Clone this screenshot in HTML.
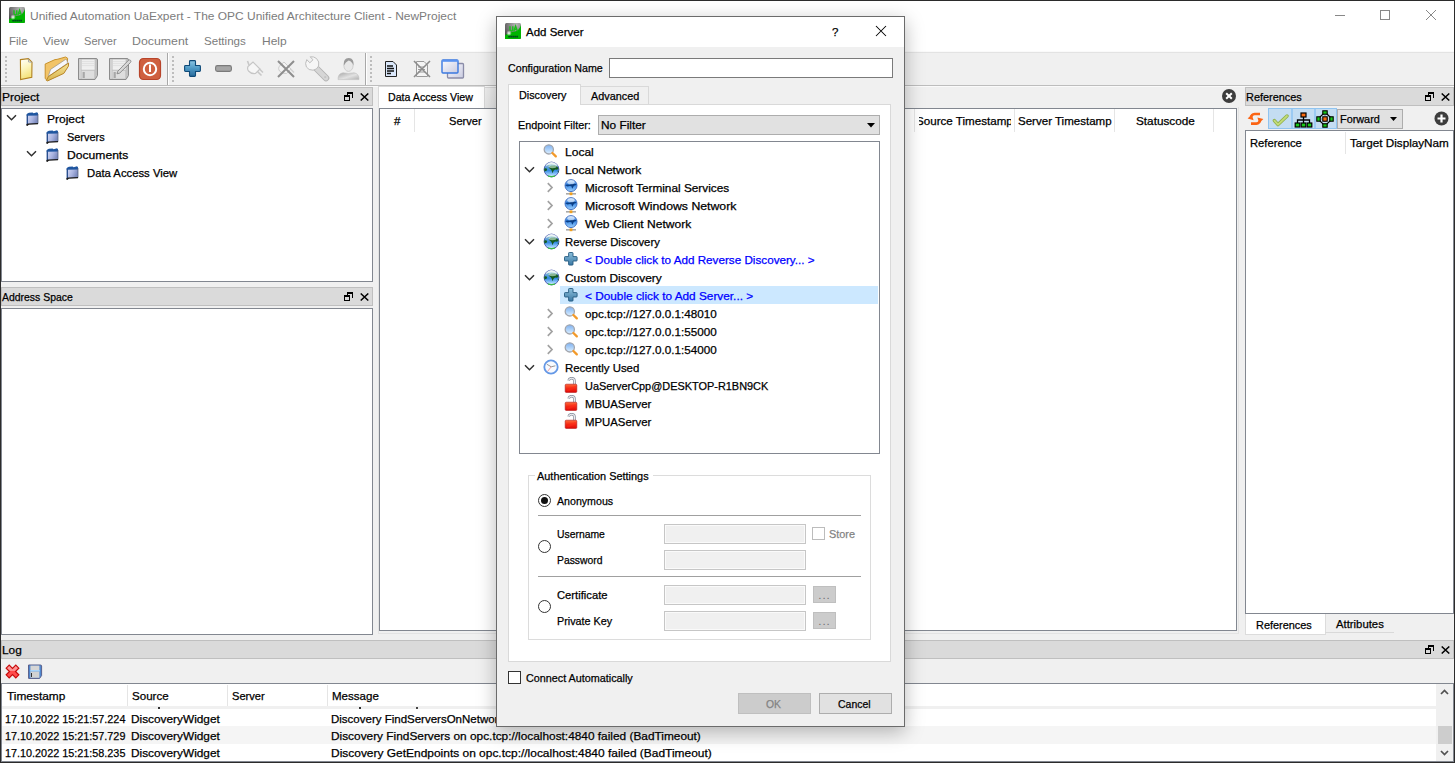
<!DOCTYPE html>
<html><head><meta charset="utf-8">
<style>
*{box-sizing:border-box;margin:0;padding:0}
html,body{width:1455px;height:763px;overflow:hidden}
body{position:relative;background:#f0f0f0;font-family:"Liberation Sans",sans-serif;font-size:11.5px;color:#000}
.a{position:absolute}
.t{position:absolute;white-space:nowrap;line-height:14px;-webkit-text-stroke:0.25px currentColor}
.frame{position:absolute;background:#fff;border:1px solid #828790}
.dtitle{position:absolute;background:#dadada;border:1px solid #bfbfbf}
.hdiv{position:absolute;width:1px;background:#e5e5e5}
.grip{width:2px;height:26px;background:repeating-linear-gradient(#bdbdbd 0 2px,transparent 2px 4px)}
.float{position:absolute;width:9px;height:9px}
.dclose{position:absolute;width:9px;height:8px}
.dclose svg{display:block}
.book{position:absolute;width:14px;height:15px}
.dig{letter-spacing:-0.55px}
.blue{color:#0000ff}
.radio{position:absolute;width:13px;height:13px;border:1px solid #333;border-radius:50%;background:#fff}
.radio.on:after{content:"";position:absolute;left:2px;top:2px;width:7px;height:7px;border-radius:50%;background:#111}
.dis{position:absolute;width:142px;height:20px;background:#f0f0f0;border:1px solid #c6c6c6;box-shadow:inset 0 0 0 1px #fafafa}
.dots{position:absolute;width:23px;height:17px;background:#cccccc;border:1px solid #bfbfbf;color:#6f6f6f;font-size:11.5px;line-height:16px;text-align:center;letter-spacing:1px}
.dig2{letter-spacing:-0.2px}
.caps{letter-spacing:0}
</style></head><body>
<svg width="0" height="0" style="position:absolute">
 <defs>
  <linearGradient id="uag" x1="0" y1="0" x2="1" y2="1"><stop offset="0" stop-color="#555"/><stop offset=".45" stop-color="#9a9a9a"/><stop offset=".5" stop-color="#00b000"/><stop offset="1" stop-color="#00a800"/></linearGradient>
  <linearGradient id="lens" x1="0" y1="0" x2="0" y2="1"><stop offset="0" stop-color="#7fb0f0"/><stop offset=".45" stop-color="#a6cdf8"/><stop offset="1" stop-color="#e0f0ff"/></linearGradient>
  <linearGradient id="glb" x1="0" y1="0" x2="0" y2="1"><stop offset="0" stop-color="#c8e8d0"/><stop offset=".3" stop-color="#6aa8d8"/><stop offset=".55" stop-color="#2f86e0"/><stop offset=".85" stop-color="#9ed0ff"/><stop offset="1" stop-color="#eef8ff"/></linearGradient>
  <linearGradient id="sglb" x1="0" y1="0" x2="0" y2="1"><stop offset="0" stop-color="#cfe6ff"/><stop offset=".4" stop-color="#2e7fe0"/><stop offset="1" stop-color="#9fd2ff"/></linearGradient>
  <linearGradient id="plg" x1="0" y1="0" x2="0" y2="1"><stop offset="0" stop-color="#8cc0dc"/><stop offset="1" stop-color="#3a78a4"/></linearGradient>
  <linearGradient id="lkg" x1="0" y1="0" x2="0" y2="1"><stop offset="0" stop-color="#ff6a3a"/><stop offset=".5" stop-color="#f42a14"/><stop offset="1" stop-color="#e00808"/></linearGradient>
  <radialGradient id="uagr" cx=".7" cy=".1" r=".9"><stop offset="0" stop-color="#b8b8b8"/><stop offset=".6" stop-color="#7a7a7a"/><stop offset="1" stop-color="#4a4a4a"/></radialGradient>
  <radialGradient id="glr" cx=".5" cy=".5" r=".5"><stop offset="0" stop-color="#fff"/><stop offset="1" stop-color="#fff" stop-opacity="0"/></radialGradient>
  <symbol id="uaicon" viewBox="0 0 16 16">
   <rect x="0" y="0" width="16" height="16" rx="1.5" fill="url(#uagr)"/>
   <path d="M0 16 V12.5 Q3 9.6 7 9 Q11.5 8.6 13.6 6.4 Q15.2 4.5 16 2 V14.5 Q16 16 14.5 16Z" fill="#00b400"/>
   <path d="M5 3.2 V6.6 Q5 8 6.4 8 Q7.8 8 7.8 6.6 V3.2" fill="none" stroke="#18c018" stroke-width="1.4"/>
   <path d="M8.8 8.2 L10.6 3 L12.4 8.2 M9.5 6.4 H11.7" fill="none" stroke="#18c018" stroke-width="1.3"/>
   <circle cx="4" cy="10.2" r="2.8" fill="url(#glr)"/>
   <path d="M3.4 13.6 H13.2" stroke="#032" stroke-width="1.8" stroke-dasharray="1.4 .6"/>
  </symbol>
  <symbol id="chev" viewBox="0 0 11 7"><path d="M1 1.2 L5.5 5.7 L10 1.2" fill="none" stroke="#303030" stroke-width="1.5"/></symbol>
  <symbol id="chevr" viewBox="0 0 8 11"><path d="M1.8 1.2 L6 5.5 L1.8 9.8" fill="none" stroke="#a2a2a2" stroke-width="1.7"/></symbol>
  <symbol id="mag" viewBox="0 0 16 15"><circle cx="5.8" cy="5.4" r="4.6" fill="url(#lens)" stroke="#a2a6ae" stroke-width="1.3"/><path d="M9.4 9 L12.8 12.4" stroke="#f39a2a" stroke-width="2.3" stroke-linecap="round"/></symbol>
  <symbol id="globe" viewBox="0 0 17 17">
   <circle cx="8.5" cy="8.5" r="7.4" fill="url(#glb)" stroke="#5262b4" stroke-width="1"/>
   <path d="M1.2 7.6 Q2.6 7 3.6 7.6 Q4.6 8.6 3.8 9.6 Q2.8 10.2 1.6 10.6 Q1 9 1.2 7.6Z" fill="#155e22"/>
   <path d="M5.6 6.8 Q6.5 4.6 9 4.4 Q12 4.2 14.4 5.8 Q15.6 7.2 15.5 8.4 Q14.6 8 13.8 8.8 Q12.4 8.2 11.2 9 Q10.2 10 9.6 12.2 Q9 10.6 8.6 9.4 Q7.8 7.8 5.6 6.8Z" fill="#145a20"/>
   <path d="M15.2 9.4 Q15.9 10 15.6 11.8 Q14.8 11 14.6 10Z" fill="#155e22"/>
   <path d="M2.2 5.2 Q5 1.2 8.5 1.1 Q12.5 1.2 15 5.2 Q12 3.6 8.5 3.6 Q5 3.6 2.2 5.2Z" fill="#fff" opacity=".75"/>
   <ellipse cx="9.5" cy="5.6" rx="4" ry="1.6" fill="#e8fff0" opacity=".55"/>
   <path d="M5 14.9 Q8.5 16.2 12 14.9" stroke="#3cba44" stroke-width="1.3" fill="none"/>
  </symbol>
  <symbol id="sglobe" viewBox="0 0 14 17">
   <circle cx="7" cy="6.6" r="6" fill="url(#sglb)" stroke="#3d6cc0" stroke-width=".9"/>
   <path d="M1.2 6.2 Q3 5.2 5 5.8 Q8 4.2 12.6 5 Q11.8 6.6 10 6.8 L8.2 9.8 L7.4 7.2 Q5 6.6 3.5 7.6Z" fill="#0b3f86"/>
   <ellipse cx="7" cy="3.2" rx="3.6" ry="2" fill="#fff" opacity=".55"/>
   <path d="M2 14.8H12" stroke="#a9a9a9" stroke-width="1.6"/>
   <rect x="5.6" y="13.4" width="2.8" height="2.8" fill="#f0a020"/>
  </symbol>
  <symbol id="splus" viewBox="0 0 14 14"><path d="M4.6 1.2 Q4.6 0.5 5.3 0.5 L8.3 0.5 Q9 0.5 9 1.2 L9 4.6 L12.4 4.6 Q13.1 4.6 13.1 5.3 L13.1 8.3 Q13.1 9 12.4 9 L9 9 L9 12.4 Q9 13.1 8.3 13.1 L5.3 13.1 Q4.6 13.1 4.6 12.4 L4.6 9 L1.2 9 Q0.5 9 0.5 8.3 L0.5 5.3 Q0.5 4.6 1.2 4.6 L4.6 4.6Z" fill="url(#plg)" stroke="#245a80" stroke-width=".9"/></symbol>
  <symbol id="clock" viewBox="0 0 16 16"><circle cx="8" cy="8" r="6.7" fill="#f8fafe" stroke="#6498e6" stroke-width="1.8"/><path d="M8.2 7.8 L3.8 5.2 M8.2 7.8 L12.4 6.8" stroke="#8a8a8a" stroke-width=".9"/><path d="M8.2 7.8 L4.6 12.4" stroke="#f28a8a" stroke-width=".8"/></symbol>
  <symbol id="lock" viewBox="0 0 14 16">
   <path d="M10.5 7.5 V4.2 Q10.5 1.2 7.6 1.2 Q5.2 1.2 4.6 3.6" fill="none" stroke="#8c919e" stroke-width="2.6"/>
   <path d="M10.5 7.5 V4.2 Q10.5 1.2 7.6 1.2 Q5.2 1.2 4.6 3.6" fill="none" stroke="#eceef2" stroke-width="1.1"/>
   <rect x="1.2" y="7.2" width="11.6" height="8.2" rx="1" fill="url(#lkg)" stroke="#b01818" stroke-width=".6"/>
   <path d="M2 13 L11 9 L12.4 9 L12.4 11 L4 14.6Z" fill="#ff2a1a" opacity=".5"/>
  </symbol>
  <linearGradient id="bkg" x1="0" y1="0" x2="1" y2="0.4"><stop offset="0" stop-color="#d6dcf8"/><stop offset=".6" stop-color="#aab4e0"/><stop offset="1" stop-color="#7e8cc0"/></linearGradient>
  <symbol id="book" viewBox="0 0 14 15">
   <rect x="2.2" y="3" width="10.6" height="10" fill="url(#bkg)"/>
   <rect x="1.6" y="3" width="1.4" height="10.5" fill="#2a4f8f"/>
   <path d="M1.6 4.6 Q1.8 1.8 4 1.7 L7.6 1.4 L8.6 2.2 L12 1.2 L13 2.2 L13 4.4 L1.6 4.8Z" fill="#1f56a0"/>
   <path d="M12.9 3 V12.6" stroke="#4a5a80" stroke-width=".9"/>
   <path d="M1 14.3 Q1.2 12.6 3 12.6 L13 12.1 L13 13.2 L4 13.8 Q3 14.2 2.6 15Z" fill="#1a1a1a"/>
  </symbol>
  <symbol id="flt" viewBox="0 0 9 9" shape-rendering="crispEdges"><path d="M3 0H9V6H8V2H4V3H3Z" fill="#000"/><path d="M0 3H6V9H0Z M1 5V8H5V5Z" fill="#000" fill-rule="evenodd"/></symbol>
  <symbol id="xcl" viewBox="0 0 9 8"><path d="M0.7 0.5L8.3 7.5M8.3 0.5L0.7 7.5" stroke="#000" stroke-width="1.5"/></symbol>
 </defs>
</svg>
<!-- window border -->
<div class="a" style="left:0;top:0;width:1455px;height:763px;border:1px solid #2b2b2b;z-index:50;pointer-events:none"></div>
<!-- title bar -->
<div class="a" style="left:1px;top:1px;width:1453px;height:29px;background:#fff"></div>
<svg class="a" style="left:9px;top:7px" width="16" height="16"><use href="#uaicon"/></svg>
<div class="t" style="left:30px;top:9px;color:#7c7c7c;-webkit-text-stroke:0;transform:scaleX(1.0393);transform-origin:0 0">Unified Automation UaExpert - The OPC Unified Architecture Client - NewProject</div>
<!-- caption buttons -->
<div class="a" style="left:1335px;top:15px;width:10px;height:1px;background:#888"></div>
<div class="a" style="left:1380px;top:10px;width:10px;height:10px;border:1px solid #888"></div>
<svg class="a" style="left:1425px;top:9px" width="12" height="12" viewBox="0 0 12 12"><path d="M1 1L11 11M11 1L1 11" stroke="#888" stroke-width="1"/></svg>
<!-- menu bar -->
<div class="a" style="left:1px;top:30px;width:1453px;height:21px;background:#fff"></div>
<div class="t" style="left:9px;top:34px;color:#7c7c7c;-webkit-text-stroke:0;transform:scaleX(1.0038);transform-origin:0 0">File</div>
<div class="t" style="left:43px;top:34px;color:#7c7c7c;-webkit-text-stroke:0;transform:scaleX(1.0438);transform-origin:0 0">View</div>
<div class="t" style="left:84px;top:34px;color:#7c7c7c;-webkit-text-stroke:0;transform:scaleX(0.9625);transform-origin:0 0">Server</div>
<div class="t" style="left:132px;top:34px;color:#7c7c7c;-webkit-text-stroke:0;transform:scaleX(1.0723);transform-origin:0 0">Document</div>
<div class="t" style="left:204px;top:34px;color:#7c7c7c;-webkit-text-stroke:0;transform:scaleX(1.0060);transform-origin:0 0">Settings</div>
<div class="t" style="left:262px;top:34px;color:#7c7c7c;-webkit-text-stroke:0;transform:scaleX(1.0443);transform-origin:0 0">Help</div>
<!-- toolbar -->
<div class="a" style="left:1px;top:51px;width:1453px;height:1px;background:#fafafa"></div>
<div class="a" style="left:1px;top:52px;width:1453px;height:1px;background:#e3e3e3"></div>
<div class="a" style="left:1px;top:85px;width:1453px;height:1px;background:#bdbdbd"></div>
<div class="a" style="left:1px;top:86px;width:1453px;height:1px;background:#fafafa"></div>
<!-- grips -->
<div class="a grip" style="left:5px;top:56px"></div>
<div class="a" style="left:167px;top:53px;width:1px;height:32px;background:#a8a8a8"></div><div class="a" style="left:168px;top:53px;width:1px;height:32px;background:#fff"></div>
<div class="a grip" style="left:172px;top:56px"></div>
<div class="a" style="left:365px;top:53px;width:1px;height:32px;background:#a8a8a8"></div><div class="a" style="left:366px;top:53px;width:1px;height:32px;background:#fff"></div>
<div class="a grip" style="left:370px;top:56px"></div>
<!-- tb icons -->
<svg class="a" style="left:18px;top:57px" width="16" height="24" viewBox="0 0 16 24">
 <defs><linearGradient id="ng" x1="0" y1="0" x2="0.3" y2="1"><stop offset="0" stop-color="#ffffff"/><stop offset=".5" stop-color="#fdf6c0"/><stop offset="1" stop-color="#f4e27a"/></linearGradient></defs>
 <path d="M2.4 2.6 L10.4 1.6 L14 5.2 L13.8 20.4 L2.6 22.6Z" fill="url(#ng)" stroke="#b08020" stroke-width="1.1"/>
 <path d="M10.4 1.6 L10.6 5 L14 5.2" fill="none" stroke="#9a9aa0" stroke-width=".8"/>
</svg>
<svg class="a" style="left:44px;top:56px" width="26" height="26" viewBox="0 0 26 26">
 <defs><linearGradient id="fg" x1="0" y1="0" x2="0" y2="1"><stop offset="0" stop-color="#f6e498"/><stop offset="1" stop-color="#d8b44e"/></linearGradient></defs>
 <path d="M1.2 8 L11 3.6 L13 3.4 L21.5 1 L23.6 2.2 L23.4 6 L2.6 23.8 L1.2 22.6Z" fill="#f2c468" stroke="#c8922c" stroke-width="1"/>
 <path d="M4.2 20.6 L6.6 13.4 L21.6 3.4 L23.2 4.4 L23.4 7.4Z" fill="#f7f7fb" stroke="#8c8c8c" stroke-width=".6"/>
 <path d="M2.4 24.4 L4.4 20.6 L24.6 7 L24.4 10.2 L19.8 17.4 L3.6 24.9Z" fill="url(#fg)" stroke="#b8862a" stroke-width="1"/>
</svg>
<svg class="a" style="left:77px;top:57px" width="22" height="24" viewBox="0 0 22 24">
 <path d="M1.5 1.5 H19 Q20.5 1.5 20.5 3 V18.5 L18 22.5 H1.5Z" fill="#c2c2c2" stroke="#8c8c8c" stroke-width="1"/>
 <rect x="2.2" y="2.4" width="1.6" height="19.4" fill="#d6d6d6"/>
 <rect x="4.6" y="2.6" width="13" height="8.6" fill="#efefef"/>
 <path d="M5 4.6H17M5 6.6H17M5 8.6H17" stroke="#dcdcdc" stroke-width=".8"/>
 <rect x="4.6" y="11.2" width="13" height="1.4" fill="#fafafa"/>
 <rect x="4.6" y="13.8" width="12.6" height="7.8" fill="#dedede"/>
 <rect x="5.6" y="15" width="2.2" height="6" fill="#a8a8a8"/>
</svg>
<svg class="a" style="left:108px;top:57px" width="24" height="24" viewBox="0 0 24 24">
 <path d="M1.5 1.5 H19 Q20.5 1.5 20.5 3 V18.5 L18 22.5 H1.5Z" fill="#c2c2c2" stroke="#8c8c8c" stroke-width="1"/>
 <rect x="2.2" y="2.4" width="1.6" height="19.4" fill="#d6d6d6"/>
 <rect x="4.6" y="2.6" width="13" height="8.6" fill="#efefef"/>
 <path d="M5 4.6H17M5 6.6H17M5 8.6H17" stroke="#dcdcdc" stroke-width=".8"/>
 <rect x="4.6" y="11.2" width="13" height="1.4" fill="#fafafa"/>
 <rect x="4.6" y="13.8" width="12.6" height="7.8" fill="#dedede"/>
 <rect x="5.6" y="15" width="2.2" height="6" fill="#a8a8a8"/>
 <path d="M9.8 14.2 L20.4 3.4 Q21.6 2.4 22.6 3.4 Q23.4 4.4 22.4 5.6 L11.8 16 L9 16.8Z" fill="#d8d8d8" stroke="#8e8e8e" stroke-width="1"/>
</svg>
<svg class="a" style="left:138px;top:57px" width="24" height="24" viewBox="0 0 24 24">
 <rect x="1.5" y="1.5" width="21" height="21" rx="4" fill="#cf6040" stroke="#b8442a" stroke-width="1.2"/>
 <circle cx="12" cy="12" r="6.2" fill="none" stroke="#fff" stroke-width="2"/>
 <rect x="11" y="7.5" width="2" height="7.5" fill="#fff"/>
</svg>
<svg class="a" style="left:184px;top:60px" width="17" height="17" viewBox="0 0 17 17">
 <defs><linearGradient id="pg" x1="0" y1="0" x2="0" y2="1"><stop offset="0" stop-color="#8cc6e4"/><stop offset=".5" stop-color="#4d98c4"/><stop offset="1" stop-color="#2a6c9c"/></linearGradient></defs>
 <path d="M5.5 1.5 Q5.5 0.6 6.4 0.6 L10.6 0.6 Q11.5 0.6 11.5 1.5 L11.5 5.5 L15.5 5.5 Q16.4 5.5 16.4 6.4 L16.4 10.6 Q16.4 11.5 15.5 11.5 L11.5 11.5 L11.5 15.5 Q11.5 16.4 10.6 16.4 L6.4 16.4 Q5.5 16.4 5.5 15.5 L5.5 11.5 L1.5 11.5 Q0.6 11.5 0.6 10.6 L0.6 6.4 Q0.6 5.5 1.5 5.5 L5.5 5.5Z" fill="url(#pg)" stroke="#0f4a78" stroke-width="1.1"/>
</svg>
<svg class="a" style="left:215px;top:65px" width="17" height="7" viewBox="0 0 17 7"><rect x="0.6" y="0.6" width="15.8" height="5.8" rx="1.8" fill="#a6a6a6" stroke="#7a7a7a" stroke-width="1.1"/></svg>
<svg class="a" style="left:246px;top:60px" width="18" height="18" viewBox="0 0 18 18">
 <path d="M2 6.5 L7 2 L14 9 L9.5 13.5 Q5 14 2.5 11 Q1 9 2 6.5Z" fill="#f7f7f7" stroke="#c6c6c6" stroke-width="1.2"/>
 <path d="M11.5 11.5 L15.5 15.5 M13.5 9 L17 12.5 M3 5 L1.5 1" stroke="#c8c8c8" stroke-width="1.6"/>
</svg>
<svg class="a" style="left:277px;top:60px" width="18" height="18" viewBox="0 0 18 18">
 <path d="M2 6.5 L7 2 L14 9 L9.5 13.5 Q5 14 2.5 11 Q1 9 2 6.5Z" fill="#f4f4f4" stroke="#cdcdcd" stroke-width="1"/>
 <path d="M11.5 11.5 L15.5 15.5 M13.5 9 L17 12.5" stroke="#d0d0d0" stroke-width="1.4"/>
 <path d="M1 1 L17 17 M17 1 L1 17" stroke="#8e8e8e" stroke-width="2"/>
</svg>
<svg class="a" style="left:304px;top:56px" width="26" height="26" viewBox="0 0 26 26">
 <path d="M11 11 L22 22" stroke="#b4b4b4" stroke-width="6.6" stroke-linecap="round"/>
 <path d="M11 11 L22 22" stroke="#d6d6d6" stroke-width="4.6" stroke-linecap="round"/>
 <path d="M2.8 3.6 L5.8 6.8 L9 3.8 L6.2 0.8 Q9.8 0.2 12.6 2.6 Q15.8 5.6 14.6 10 Q13 13.8 9 14.2 Q4.6 14.4 2.4 11 Q0.6 7.4 2.8 3.6Z" fill="#f6f6f6" stroke="#bdbdbd" stroke-width="1"/>
 <circle cx="21.2" cy="21.2" r="1.1" fill="#c4c4c4"/>
</svg>
<svg class="a" style="left:337px;top:56px" width="23" height="25" viewBox="0 0 23 25">
 <defs><linearGradient id="psg" x1="0" y1="0" x2="1" y2="1"><stop offset="0" stop-color="#a8a8a8"/><stop offset=".55" stop-color="#e2e2e2"/><stop offset="1" stop-color="#b0b0b0"/></linearGradient></defs>
 <path d="M1 23.6 Q0.8 17.6 6 16.8 L11.5 17.4 L17 16.8 Q22.2 17.6 22 23.6Z" fill="url(#psg)" stroke="#c0c0c0" stroke-width=".6"/>
 <ellipse cx="11.5" cy="9.4" rx="4.6" ry="6" fill="#e8e8e8" stroke="#c6c6c6" stroke-width=".8"/>
 <path d="M6.8 9.6 Q6 2.2 11.8 2 Q17.2 2.2 16.6 9.6 Q14.8 5.4 11.6 4.6 Q8.6 6 6.8 9.6Z" fill="#9a9a9a"/>
</svg>
<svg class="a" style="left:384px;top:60px" width="14" height="18" viewBox="0 0 14 18">
 <path d="M1.5 1.5 L9 1.5 L12.5 5 L12.5 16.5 L1.5 16.5Z" fill="#dbe8fb" stroke="#222" stroke-width="1"/>
 <path d="M3 6h6M3 8.5h7M3 11h7M3 13.5h4" stroke="#111" stroke-width="1.3"/>
</svg>
<svg class="a" style="left:413px;top:60px" width="18" height="18" viewBox="0 0 18 18">
 <path d="M3.5 1.5 L11 1.5 L14.5 5 L14.5 16.5 L3.5 16.5Z" fill="#f4f4f4" stroke="#9a9a9a" stroke-width="1"/>
 <path d="M5 7h6M5 9.5h7M5 12h7" stroke="#9a9a9a" stroke-width="1.1"/>
 <path d="M1 1 L17 17 M17 1 L1 17" stroke="#8c8c8c" stroke-width="1.6"/>
</svg>
<svg class="a" style="left:441px;top:59px" width="24" height="20" viewBox="0 0 24 20">
 <defs><linearGradient id="wg" x1="0" y1="0" x2="1" y2="1"><stop offset="0" stop-color="#fbfbff"/><stop offset="1" stop-color="#c9cbe0"/></linearGradient></defs>
 <rect x="6.5" y="4.5" width="16" height="14.5" rx="1" fill="url(#wg)" stroke="#8a8ca8" stroke-width="1.3"/>
 <rect x="1" y="1" width="16" height="13" rx="1" fill="url(#wg)" stroke="#3a78e0" stroke-width="1.4"/>
 <rect x="1" y="1" width="16" height="1.8" fill="#5a92f0"/>
</svg>
<!-- Project dock -->
<div class="dtitle" style="left:1px;top:87px;width:372px;height:19px"></div>
<div class="t" style="left:2px;top:90px;transform:scaleX(1.0449);transform-origin:0 0">Project</div>
<svg class="float" style="left:344px;top:92px" width="9" height="9"><use href="#flt"/></svg>
<svg class="dclose" style="left:360px;top:93px" width="9" height="8"><use href="#xcl"/></svg>
<div class="frame" style="left:1px;top:108px;width:372px;height:174px"></div>
<svg class="a" style="left:6px;top:114px" width="11" height="7" viewBox="0 0 11 7"><path d="M1 1.2 L5.5 5.7 L10 1.2" fill="none" stroke="#303030" stroke-width="1.5"/></svg>
<svg class="book" style="left:25px;top:111px" width="14" height="15"><use href="#book"/></svg>
<div class="t" style="left:47px;top:112px;transform:scaleX(1.0449);transform-origin:0 0">Project</div>
<svg class="book" style="left:45px;top:129px" width="14" height="15"><use href="#book"/></svg>
<div class="t" style="left:67px;top:130px;transform:scaleX(0.9490);transform-origin:0 0">Servers</div>
<svg class="a" style="left:26px;top:150px" width="11" height="7" viewBox="0 0 11 7"><path d="M1 1.2 L5.5 5.7 L10 1.2" fill="none" stroke="#303030" stroke-width="1.5"/></svg>
<svg class="book" style="left:45px;top:147px" width="14" height="15"><use href="#book"/></svg>
<div class="t" style="left:67px;top:148px;transform:scaleX(1.0539);transform-origin:0 0">Documents</div>
<svg class="book" style="left:65px;top:165px" width="14" height="15"><use href="#book"/></svg>
<div class="t" style="left:87px;top:166px;transform:scaleX(0.9820);transform-origin:0 0">Data Access View</div>

<!-- Address Space dock -->
<div class="dtitle" style="left:1px;top:287px;width:372px;height:19px"></div>
<div class="t" style="left:2px;top:290px;transform:scaleX(0.9078);transform-origin:0 0">Address Space</div>
<svg class="float" style="left:344px;top:292px" width="9" height="9"><use href="#flt"/></svg>
<svg class="dclose" style="left:360px;top:293px" width="9" height="8"><use href="#xcl"/></svg>
<div class="frame" style="left:1px;top:308px;width:372px;height:327px"></div>

<!-- central -->
<div class="a" style="left:378px;top:86px;width:107px;height:23px;background:#fff;border:1px solid #d9d9d9;border-bottom:none"></div>
<div class="t" style="left:388px;top:90px;transform:scaleX(0.925);transform-origin:0 0">Data Access View</div>
<div class="a" style="left:484px;top:87px;width:20px;height:21px;background:linear-gradient(#f0f0f0,#e8e8e8);border:1px solid #d9d9d9;border-bottom:none"></div>
<svg class="a" style="left:1221px;top:88px" width="16" height="16" viewBox="0 0 16 16"><circle cx="8" cy="8" r="7" fill="#3d3d3d"/><path d="M5.2 5.2L10.8 10.8M10.8 5.2L5.2 10.8" stroke="#fff" stroke-width="2"/></svg>
<div class="a" style="left:378px;top:107px;width:861px;height:527px;border:1px solid #e3e3e3;border-top:none"></div>
<div class="frame" style="left:379px;top:108px;width:858px;height:523px"></div>
<div class="hdiv" style="left:414px;top:109px;height:23px"></div>
<div class="t" style="left:394px;top:114px">#</div>
<div class="t" style="left:449px;top:114px;transform:scaleX(0.9625);transform-origin:0 0">Server</div>
<div class="hdiv" style="left:914px;top:109px;height:23px"></div>
<div class="a" style="left:919px;top:110px;width:92px;height:20px;overflow:hidden"><div class="t" style="left:-3px;top:4px;transform:scaleX(1.01);transform-origin:0 0">Source Timestamp</div></div>
<div class="hdiv" style="left:1014px;top:109px;height:23px"></div>
<div class="t" style="left:1018px;top:114px;transform:scaleX(1.0031);transform-origin:0 0">Server Timestamp</div>
<div class="hdiv" style="left:1114px;top:109px;height:23px"></div>
<div class="t" style="left:1136px;top:114px;transform:scaleX(1.0219);transform-origin:0 0">Statuscode</div>
<div class="hdiv" style="left:1213px;top:109px;height:23px"></div>

<!-- References dock -->
<div class="dtitle" style="left:1245px;top:87px;width:209px;height:19px"></div>
<div class="t" style="left:1246px;top:90px;transform:scaleX(0.9488);transform-origin:0 0">References</div>
<svg class="float" style="left:1425px;top:92px" width="9" height="9"><use href="#flt"/></svg>
<svg class="dclose" style="left:1441px;top:93px" width="9" height="8"><use href="#xcl"/></svg>
<svg class="a" style="left:1246px;top:110px" width="19" height="17" viewBox="0 0 19 17">
 <path d="M14 4 H8.5 Q7 4 6 5.2 L4.8 6.8" fill="none" stroke="#fb6414" stroke-width="2.6"/>
 <path d="M1.6 8.6 L5.8 4.6 L7.6 10.2Z" fill="#fb6414"/>
 <path d="M5 13.6 H10.5 Q12 13.6 13 12.4 L14.2 10.8" fill="none" stroke="#fb6414" stroke-width="2.6"/>
 <path d="M17.4 9 L13.2 13 L11.4 7.4Z" fill="#fb6414"/>
</svg>
<div class="a" style="left:1268px;top:108px;width:69px;height:21px;background:#c4ddf2;border:1px solid #90c4f0"></div>
<div class="a" style="left:1291px;top:109px;width:2px;height:19px;background:#9ccaf2"></div>
<div class="a" style="left:1314px;top:109px;width:2px;height:19px;background:#9ccaf2"></div>
<svg class="a" style="left:1271px;top:110px" width="18" height="17" viewBox="0 0 18 17"><path d="M3.4 10.6 L7 14.6 L16 6" fill="none" stroke="#8fae4a" stroke-width="3.4" stroke-linejoin="round" stroke-linecap="round"/><path d="M3.4 10.6 L7 14.6 L16 6" fill="none" stroke="#c2dc78" stroke-width="1.8" stroke-linejoin="round" stroke-linecap="round"/></svg>
<svg class="a" style="left:1294px;top:111px" width="19" height="17" viewBox="0 0 19 17">
 <path d="M9.5 6 V9 M3.5 12 V9 H15.5 V12 M9.5 9 V12" fill="none" stroke="#000" stroke-width="1.3"/>
 <rect x="7" y="2" width="5" height="4" fill="#f86a10" stroke="#000" stroke-width="1.2"/>
 <rect x="1.2" y="12" width="4.6" height="4" fill="#18c818" stroke="#000" stroke-width="1.2"/>
 <rect x="7.2" y="12" width="4.6" height="4" fill="#18c818" stroke="#000" stroke-width="1.2"/>
 <rect x="13.2" y="12" width="4.6" height="4" fill="#18c818" stroke="#000" stroke-width="1.2"/>
</svg>
<svg class="a" style="left:1316px;top:110px" width="18" height="18" viewBox="0 0 18 18">
 <path d="M9 2 L16 9 L9 16 L2 9Z" fill="none" stroke="#000" stroke-width="1.2"/>
 <path d="M9 3V15M3 9H15" stroke="#555" stroke-width=".7" stroke-dasharray="1 1"/>
 <rect x="6.8" y="0.8" width="4.4" height="3.4" fill="#18c818" stroke="#000" stroke-width="1.1"/>
 <rect x="6.8" y="13.8" width="4.4" height="3.4" fill="#18c818" stroke="#000" stroke-width="1.1"/>
 <rect x="0.8" y="6.8" width="3.4" height="4.4" fill="#18c818" stroke="#000" stroke-width="1.1"/>
 <rect x="13.8" y="6.8" width="3.4" height="4.4" fill="#18c818" stroke="#000" stroke-width="1.1"/>
 <rect x="6.8" y="6.8" width="4.4" height="4.4" fill="#f86a10" stroke="#000" stroke-width="1.1"/>
</svg>
<div class="a" style="left:1337px;top:109px;width:66px;height:20px;background:#e1e1e1;border:1px solid #adadad"></div>
<div class="t" style="left:1340px;top:112px;transform:scaleX(0.9437);transform-origin:0 0">Forward</div>
<svg class="a" style="left:1390px;top:117px" width="7" height="4" viewBox="0 0 7 4"><path d="M0 0H7L3.5 4Z" fill="#000"/></svg>
<svg class="a" style="left:1434px;top:111px" width="15" height="15" viewBox="0 0 15 15"><circle cx="7.5" cy="7.5" r="7" fill="#3d3d3d"/><path d="M7.5 3.5V11.5M3.5 7.5H11.5" stroke="#fff" stroke-width="2.2"/></svg>
<div class="frame" style="left:1245px;top:130px;width:209px;height:484px"></div>
<div class="hdiv" style="left:1345px;top:132px;height:22px"></div>
<div class="t" style="left:1250px;top:136px;transform:scaleX(0.9763);transform-origin:0 0">Reference</div>
<div class="t" style="left:1350px;top:136px;transform:scaleX(1.0171);transform-origin:0 0">Target DisplayNam</div>
<div class="a" style="left:1245px;top:614px;width:81px;height:21px;background:#fff;border:1px solid #dcdcdc;border-top:none"></div>
<div class="t" style="left:1256px;top:618px;transform:scaleX(0.9488);transform-origin:0 0">References</div>
<div class="a" style="left:1325px;top:632px;width:69px;height:1px;background:#d9d9d9"></div>
<div class="t" style="left:1336px;top:617px;transform:scaleX(0.9840);transform-origin:0 0">Attributes</div>

<!-- Log dock -->
<div class="dtitle" style="left:1px;top:640px;width:1453px;height:19px"></div>
<div class="t" style="left:2px;top:643px;transform:scaleX(1.0319);transform-origin:0 0">Log</div>
<svg class="float" style="left:1425px;top:645px" width="9" height="9"><use href="#flt"/></svg>
<svg class="dclose" style="left:1441px;top:646px" width="9" height="8"><use href="#xcl"/></svg>
<svg class="a" style="left:5px;top:664px" width="15" height="15" viewBox="0 0 15 15">
 <defs><linearGradient id="rxg" x1="0" y1="0" x2="0" y2="1"><stop offset="0" stop-color="#ffa0a0"/><stop offset=".45" stop-color="#ff8a8a"/><stop offset=".5" stop-color="#ff4a4a"/><stop offset="1" stop-color="#ff5050"/></linearGradient></defs>
 <path d="M1.2 4.2 L4.2 1.2 L7.5 4.5 L10.8 1.2 L13.8 4.2 L10.5 7.5 L13.8 10.8 L10.8 13.8 L7.5 10.5 L4.2 13.8 L1.2 10.8 L4.5 7.5Z" fill="url(#rxg)" stroke="#c80a0a" stroke-width="1.2" stroke-linejoin="miter"/>
</svg>
<svg class="a" style="left:27px;top:663px" width="16" height="17" viewBox="0 0 16 17">
 <path d="M1.5 2 H13.5 Q14.6 2 14.6 3 V12.5 L12.6 15.4 H1.6Z" fill="#4f88d0" stroke="#5a5f8a" stroke-width="1"/>
 <rect x="3.4" y="2.6" width="9" height="4.4" fill="#d6d6d6"/>
 <rect x="3.2" y="7" width="9.6" height="1.6" fill="#a8d4fa"/>
 <rect x="3.4" y="8.6" width="9" height="6.2" fill="#d2d2d2"/>
 <rect x="4" y="10" width="1" height="4" fill="#333"/>
</svg>
<div class="frame" style="left:1px;top:683px;width:1453px;height:79px"></div>
<div class="hdiv" style="left:127px;top:685px;height:21px"></div>
<div class="hdiv" style="left:227px;top:685px;height:21px"></div>
<div class="hdiv" style="left:327px;top:685px;height:21px"></div>
<div class="t" style="left:7px;top:689px;transform:scaleX(1.0329);transform-origin:0 0">Timestamp</div>
<div class="t" style="left:132px;top:689px;transform:scaleX(1.0045);transform-origin:0 0">Source</div>
<div class="t" style="left:232px;top:689px;transform:scaleX(0.9625);transform-origin:0 0">Server</div>
<div class="t" style="left:332px;top:689px;transform:scaleX(1.0029);transform-origin:0 0">Message</div>
<div class="a" style="left:2px;top:706px;width:1434px;height:3px;background:#f0f0f0"></div>
<div class="a" style="left:158px;top:707px;width:2px;height:2px;background:#333"></div>
<div class="a" style="left:359px;top:707px;width:2px;height:2px;background:#333"></div>
<div class="a" style="left:416px;top:707px;width:2px;height:2px;background:#444"></div>
<div class="a" style="left:2px;top:726px;width:1434px;height:18px;background:#f5f5f5"></div>
<div class="t" style="left:5px;top:712px;transform:scaleX(0.9414);transform-origin:0 0">17.10.2022 15:21:57.224</div>
<div class="t" style="left:131px;top:712px;transform:scaleX(1.0293);transform-origin:0 0">DiscoveryWidget</div>
<div class="t" style="left:331px;top:712px">Discovery FindServersOnNetwork</div>
<div class="t" style="left:5px;top:729px;transform:scaleX(0.9414);transform-origin:0 0">17.10.2022 15:21:57.729</div>
<div class="t" style="left:131px;top:729px;transform:scaleX(1.0293);transform-origin:0 0">DiscoveryWidget</div>
<div class="t" style="left:331px;top:729px;transform:scaleX(1.0307);transform-origin:0 0">Discovery FindServers on opc.tcp://localhost:4840 failed (BadTimeout)</div>
<div class="t" style="left:5px;top:746px;transform:scaleX(0.9414);transform-origin:0 0">17.10.2022 15:21:58.235</div>
<div class="t" style="left:131px;top:746px;transform:scaleX(1.0293);transform-origin:0 0">DiscoveryWidget</div>
<div class="t" style="left:331px;top:746px;transform:scaleX(1.0390);transform-origin:0 0">Discovery GetEndpoints on opc.tcp://localhost:4840 failed (BadTimeout)</div>
<!-- log scrollbar -->
<div class="a" style="left:1436px;top:684px;width:17px;height:77px;background:#f0f0f0"></div>
<svg class="a" style="left:1440px;top:689px" width="9" height="6" viewBox="0 0 9 6"><path d="M1 5 L4.5 1.5 L8 5" fill="none" stroke="#505050" stroke-width="1.7"/></svg>
<div class="a" style="left:1438px;top:726px;width:14px;height:18px;background:#cdcdcd"></div>
<svg class="a" style="left:1440px;top:750px" width="9" height="6" viewBox="0 0 9 6"><path d="M1 1 L4.5 4.5 L8 1" fill="none" stroke="#505050" stroke-width="1.7"/></svg>
<!-- ===== DIALOG ===== -->
<div class="a" style="left:496px;top:16px;width:409px;height:711px;background:#f0f0f0;border:1px solid #6b6b6b;box-shadow:0 5px 18px rgba(0,0,0,0.28)"></div>
<div class="a" style="left:497px;top:17px;width:407px;height:30px;background:#fff"></div>
<svg class="a" style="left:505px;top:23px" width="16" height="16"><use href="#uaicon"/></svg>
<div class="t" style="left:526px;top:25px;transform:scaleX(0.9995);transform-origin:0 0">Add Server</div>
<div class="t" style="left:832px;top:25px">?</div>
<svg class="a" style="left:875px;top:25px" width="12" height="12" viewBox="0 0 12 12"><path d="M1 1L11 11M11 1L1 11" stroke="#000" stroke-width="1.05"/></svg>

<div class="t" style="left:508px;top:61px;transform:scaleX(0.9269);transform-origin:0 0">Configuration Name</div>
<div class="a" style="left:609px;top:58px;width:284px;height:20px;background:#fff;border:1px solid #7a7a7a"></div>

<!-- tabs -->
<div class="a" style="left:508px;top:104px;width:383px;height:558px;background:#fff;border:1px solid #d9d9d9"></div>
<div class="a" style="left:580px;top:86px;width:69px;height:19px;background:#f0f0f0;border:1px solid #d9d9d9"></div>
<div class="t" style="left:591px;top:89px;transform:scaleX(0.9423);transform-origin:0 0">Advanced</div>
<div class="a" style="left:508px;top:84px;width:73px;height:21px;background:#fff;border:1px solid #d9d9d9;border-bottom:none"></div>
<div class="t" style="left:519px;top:88px;transform:scaleX(0.9390);transform-origin:0 0">Discovery</div>

<div class="t" style="left:518px;top:118px;transform:scaleX(0.9412);transform-origin:0 0">Endpoint Filter:</div>
<div class="a" style="left:598px;top:115px;width:282px;height:20px;background:#e1e1e1;border:1px solid #adadad"></div>
<div class="t" style="left:601px;top:118px;transform:scaleX(1.0311);transform-origin:0 0">No Filter</div>
<svg class="a" style="left:867px;top:123px" width="8" height="5" viewBox="0 0 8 5"><path d="M0 0H8L4 4.5Z" fill="#000"/></svg>

<!-- discovery tree -->
<div class="frame" style="left:519px;top:141px;width:361px;height:313px"></div>
<div class="a" style="left:560px;top:286px;width:318px;height:18px;background:#cce8ff"></div>

<svg class="a" style="left:543px;top:144px" width="16" height="15"><use href="#mag"/></svg>
<div class="t" style="left:565px;top:145px;transform:scaleX(1.0476);transform-origin:0 0">Local</div>

<svg class="a" style="left:524px;top:166px" width="11" height="7"><use href="#chev"/></svg>
<svg class="a" style="left:543px;top:161px" width="17" height="17"><use href="#globe"/></svg>
<div class="t" style="left:565px;top:163px;transform:scaleX(1.0485);transform-origin:0 0">Local Network</div>

<svg class="a" style="left:546px;top:182px" width="8" height="11"><use href="#chevr"/></svg>
<svg class="a" style="left:564px;top:179px" width="14" height="17"><use href="#sglobe"/></svg>
<div class="t" style="left:585px;top:181px;transform:scaleX(1.0271);transform-origin:0 0">Microsoft Terminal Services</div>

<svg class="a" style="left:546px;top:200px" width="8" height="11"><use href="#chevr"/></svg>
<svg class="a" style="left:564px;top:197px" width="14" height="17"><use href="#sglobe"/></svg>
<div class="t" style="left:585px;top:199px;transform:scaleX(1.0672);transform-origin:0 0">Microsoft Windows Network</div>

<svg class="a" style="left:546px;top:218px" width="8" height="11"><use href="#chevr"/></svg>
<svg class="a" style="left:564px;top:215px" width="14" height="17"><use href="#sglobe"/></svg>
<div class="t" style="left:585px;top:217px;transform:scaleX(1.0473);transform-origin:0 0">Web Client Network</div>

<svg class="a" style="left:524px;top:238px" width="11" height="7"><use href="#chev"/></svg>
<svg class="a" style="left:543px;top:233px" width="17" height="17"><use href="#globe"/></svg>
<div class="t" style="left:565px;top:235px;transform:scaleX(0.9824);transform-origin:0 0">Reverse Discovery</div>

<svg class="a" style="left:564px;top:252px" width="14" height="14"><use href="#splus"/></svg>
<div class="t blue" style="left:585px;top:253px;transform:scaleX(1.0159);transform-origin:0 0">&lt; Double click to Add Reverse Discovery... &gt;</div>

<svg class="a" style="left:524px;top:274px" width="11" height="7"><use href="#chev"/></svg>
<svg class="a" style="left:543px;top:269px" width="17" height="17"><use href="#globe"/></svg>
<div class="t" style="left:565px;top:271px;transform:scaleX(1.0375);transform-origin:0 0">Custom Discovery</div>

<svg class="a" style="left:564px;top:288px" width="14" height="14"><use href="#splus"/></svg>
<div class="t blue" style="left:585px;top:289px;transform:scaleX(1.0275);transform-origin:0 0">&lt; Double click to Add Server... &gt;</div>

<svg class="a" style="left:546px;top:308px" width="8" height="11"><use href="#chevr"/></svg>
<svg class="a" style="left:564px;top:306px" width="16" height="15"><use href="#mag"/></svg>
<div class="t" style="left:585px;top:307px;transform:scaleX(1.0154);transform-origin:0 0">opc.tcp://127.0.0.1:48010</div>

<svg class="a" style="left:546px;top:326px" width="8" height="11"><use href="#chevr"/></svg>
<svg class="a" style="left:564px;top:324px" width="16" height="15"><use href="#mag"/></svg>
<div class="t" style="left:585px;top:325px;transform:scaleX(1.0154);transform-origin:0 0">opc.tcp://127.0.0.1:55000</div>

<svg class="a" style="left:546px;top:344px" width="8" height="11"><use href="#chevr"/></svg>
<svg class="a" style="left:564px;top:342px" width="16" height="15"><use href="#mag"/></svg>
<div class="t" style="left:585px;top:343px;transform:scaleX(1.0154);transform-origin:0 0">opc.tcp://127.0.0.1:54000</div>

<svg class="a" style="left:524px;top:364px" width="11" height="7"><use href="#chev"/></svg>
<svg class="a" style="left:543px;top:359px" width="16" height="16"><use href="#clock"/></svg>
<div class="t" style="left:565px;top:361px;transform:scaleX(0.9935);transform-origin:0 0">Recently Used</div>

<svg class="a" style="left:564px;top:377px" width="14" height="16"><use href="#lock"/></svg>
<div class="t" style="left:585px;top:379px;transform:scaleX(0.9499);transform-origin:0 0">UaServerCpp@DESKTOP-R1BN9CK</div>
<svg class="a" style="left:564px;top:395px" width="14" height="16"><use href="#lock"/></svg>
<div class="t" style="left:585px;top:397px;transform:scaleX(0.9881);transform-origin:0 0">MBUAServer</div>
<svg class="a" style="left:564px;top:413px" width="14" height="16"><use href="#lock"/></svg>
<div class="t" style="left:585px;top:415px;transform:scaleX(0.9881);transform-origin:0 0">MPUAServer</div>

<!-- auth group -->
<div class="a" style="left:528px;top:475px;width:343px;height:165px;border:1px solid #dcdcdc"></div>
<div class="a" style="left:535px;top:470px;width:118px;height:10px;background:#fff"></div>
<div class="t" style="left:537px;top:469px;transform:scaleX(0.9487);transform-origin:0 0">Authentication Settings</div>
<div class="radio on" style="left:538px;top:494px"></div>
<div class="t" style="left:557px;top:494px;transform:scaleX(0.9238);transform-origin:0 0">Anonymous</div>
<div class="a" style="left:538px;top:515px;width:323px;height:1px;background:#a0a0a0"></div>
<div class="radio" style="left:538px;top:540px"></div>
<div class="t" style="left:557px;top:527px;transform:scaleX(0.9011);transform-origin:0 0">Username</div>
<div class="t" style="left:557px;top:553px;transform:scaleX(0.9011);transform-origin:0 0">Password</div>
<div class="dis" style="left:664px;top:524px"></div>
<div class="dis" style="left:664px;top:550px"></div>
<div class="a" style="left:812px;top:527px;width:13px;height:13px;border:1px solid #bcbcbc;background:#fff"></div>
<div class="t" style="left:829px;top:527px;color:#838383;transform:scaleX(0.9459);transform-origin:0 0">Store</div>
<div class="a" style="left:538px;top:576px;width:323px;height:1px;background:#a0a0a0"></div>
<div class="radio" style="left:538px;top:600px"></div>
<div class="t" style="left:557px;top:588px;transform:scaleX(0.9755);transform-origin:0 0">Certificate</div>
<div class="t" style="left:557px;top:614px;transform:scaleX(0.9387);transform-origin:0 0">Private Key</div>
<div class="dis" style="left:664px;top:585px"></div>
<div class="dis" style="left:664px;top:611px"></div>
<div class="dots" style="left:813px;top:586px">...</div>
<div class="dots" style="left:813px;top:612px">...</div>

<div class="a" style="left:508px;top:671px;width:13px;height:13px;border:1px solid #333;background:#fff"></div>
<div class="t" style="left:526px;top:671px;transform:scaleX(0.9378);transform-origin:0 0">Connect Automatically</div>

<div class="a" style="left:738px;top:693px;width:73px;height:21px;background:#cccccc;border:1px solid #bfbfbf"></div>
<div class="t" style="left:766px;top:697px;color:#838383;transform:scaleX(0.9028);transform-origin:0 0">OK</div>
<div class="a" style="left:819px;top:693px;width:73px;height:21px;background:#e1e1e1;border:1px solid #adadad"></div>
<div class="t" style="left:838px;top:697px;transform:scaleX(0.9107);transform-origin:0 0">Cancel</div>

</body></html>
